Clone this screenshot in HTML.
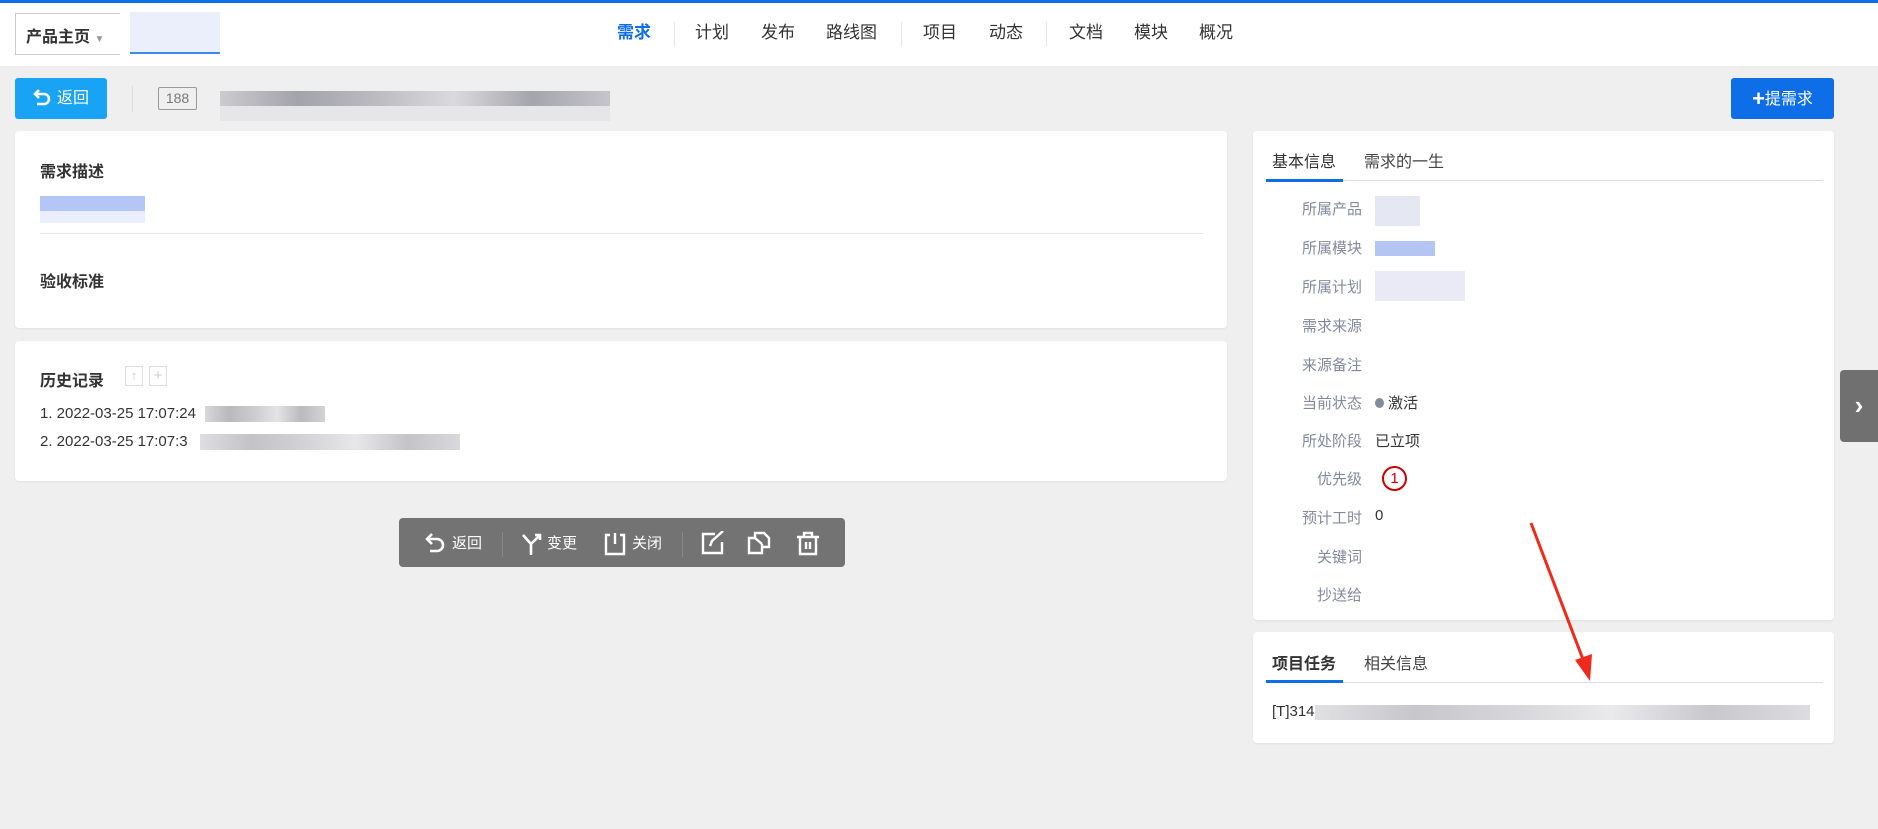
<!DOCTYPE html>
<html><head><meta charset="utf-8"><style>
*{margin:0;padding:0;box-sizing:border-box}
body{width:1878px;height:829px;background:#efefef;font-family:"Liberation Sans","Noto Sans CJK SC",sans-serif;color:#333;position:relative;overflow:hidden;font-size:15px}
.a{position:absolute}
.bar{left:0;top:0;width:1878px;height:3px;background:#0d6ee8}
.hdr{left:0;top:3px;width:1878px;height:63px;background:#fff}
.nav{top:22px;font-size:17px;color:#333;line-height:22px}
.sep{top:22px;width:1px;height:24px;background:#e5e5e5}
.card{background:#fff;border-radius:4px;box-shadow:0 1px 2px rgba(0,0,0,.06)}
.h{font-weight:bold;font-size:16px;color:#333}
.lbl{width:90px;text-align:right;color:#838a9d;left:1272px}
.val{left:1375px;color:#333}
.blur{background:linear-gradient(90deg,#c8c8cc,#9a9aa2,#b5b5bb,#d8d8dc,#9c9ca4,#c0c0c6)}
.tb{color:#fff;font-size:15px;top:533px;line-height:22px}
</style></head><body>
<div class="a bar"></div>
<div class="a hdr"></div>
<div class="a" style="left:15px;top:13px;width:105px;height:42px;border:1px solid #ccc;border-right:none;background:#fff"></div>
<div class="a" style="left:26px;top:23px;font-size:16px;font-weight:bold;color:#333">产品主页 <span style="color:#999;font-size:10px">▼</span></div>
<div class="a" style="left:130px;top:12px;width:90px;height:42px;background:#e6ecfb;border-bottom:2px solid #0d6ee8;opacity:.8"></div>
<div class="a nav" style="left:617px;color:#0d6ee8;font-weight:bold">需求</div>
<div class="a sep" style="left:674px"></div>
<div class="a nav" style="left:695px">计划</div>
<div class="a nav" style="left:761px">发布</div>
<div class="a nav" style="left:826px">路线图</div>
<div class="a sep" style="left:901px"></div>
<div class="a nav" style="left:923px">项目</div>
<div class="a nav" style="left:989px">动态</div>
<div class="a sep" style="left:1046px"></div>
<div class="a nav" style="left:1069px">文档</div>
<div class="a nav" style="left:1134px">模块</div>
<div class="a nav" style="left:1199px">概况</div>

<div class="a" style="left:15px;top:78px;width:92px;height:41px;background:#18a3f5;border-radius:3px;color:#fff;font-size:16px;line-height:41px;padding-left:42px">返回</div>
<svg class="a" style="left:33px;top:89px" width="18" height="19" viewBox="0 0 18 19" fill="none" stroke="#fff" stroke-width="2.6"><path d="M6 1L2 5l4 4M2 5h9a5 5 0 010 10H4"/></svg>
<div class="a" style="left:132px;top:86px;width:1px;height:26px;background:#ddd"></div>
<div class="a" style="left:158px;top:87px;width:39px;height:23px;border:1px solid #999;border-radius:2px;color:#777;font-size:14px;text-align:center;line-height:21px">188</div>
<div class="a blur" style="left:220px;top:91px;width:390px;height:15px;opacity:.9"></div>
<div class="a" style="left:220px;top:106px;width:390px;height:15px;background:#e6e6e8"></div>
<div class="a" style="left:1731px;top:78px;width:103px;height:41px;background:#0d6ee8;border-radius:3px;color:#fff;font-size:16px;line-height:41px;text-align:center"><b style="font-size:22px;vertical-align:-2px">+</b>提需求</div>

<div class="a card" style="left:15px;top:131px;width:1212px;height:197px"></div>
<div class="a h" style="left:40px;top:158px">需求描述</div>
<div class="a" style="left:40px;top:196px;width:105px;height:15px;background:#b4c6f6"></div>
<div class="a" style="left:40px;top:211px;width:105px;height:12px;background:#eaeefc"></div>
<div class="a" style="left:40px;top:233px;width:1163px;height:1px;background:#e8e8e8"></div>
<div class="a h" style="left:40px;top:268px">验收标准</div>

<div class="a card" style="left:15px;top:341px;width:1212px;height:140px"></div>
<div class="a h" style="left:40px;top:367px">历史记录</div>
<div class="a" style="left:125px;top:366px;width:18px;height:20px;border:1px solid #ddd;color:#ccc;font-size:13px;text-align:center;line-height:18px">↑</div>
<div class="a" style="left:149px;top:366px;width:18px;height:20px;border:1px solid #ddd;color:#ccc;font-size:15px;text-align:center;line-height:18px">+</div>
<div class="a" style="left:40px;top:405px">1. 2022-03-25 17:07:24</div>
<div class="a blur" style="left:205px;top:406px;width:120px;height:16px;opacity:.7"></div>
<div class="a" style="left:40px;top:433px">2. 2022-03-25 17:07:3</div>
<div class="a blur" style="left:200px;top:434px;width:260px;height:16px;opacity:.6"></div>

<div class="a" style="left:399px;top:518px;width:446px;height:49px;background:#737373;border-radius:4px"></div>
<svg class="a" style="left:425px;top:533px" width="20" height="22" viewBox="0 0 20 22" fill="none" stroke="#fff" stroke-width="2.6"><path d="M7 1L2 6l5 5M2 6h10a6 6 0 010 12H5"/></svg>
<div class="a tb" style="left:452px">返回</div>
<div class="a" style="left:502px;top:532px;width:1px;height:25px;background:#888"></div>
<svg class="a" style="left:521px;top:532px" width="22" height="24" viewBox="0 0 22 24" fill="none" stroke="#fff" stroke-width="2.6"><path d="M2 3l8 9v11M18 4l-8 8M14 3h5v5"/></svg>
<div class="a tb" style="left:547px">变更</div>
<svg class="a" style="left:604px;top:532px" width="22" height="24" viewBox="0 0 22 24" fill="none" stroke="#fff" stroke-width="2.4"><path d="M6 3H2v19h18V3h-4M11 1v11"/></svg>
<div class="a tb" style="left:632px">关闭</div>
<div class="a" style="left:682px;top:532px;width:1px;height:25px;background:#888"></div>
<svg class="a" style="left:701px;top:531px" width="24" height="24" viewBox="0 0 24 24" fill="none" stroke="#fff" stroke-width="2.4"><path d="M14 3H2v19h19V11M9 15l2-5 11-10"/></svg>
<svg class="a" style="left:747px;top:531px" width="24" height="24" viewBox="0 0 24 24" fill="none" stroke="#fff" stroke-width="2.4"><path d="M8 7H2v15h13V13M8 7V2h9l5 5v9h-7M8 7l7 6"/></svg>
<svg class="a" style="left:796px;top:531px" width="24" height="25" viewBox="0 0 24 25" fill="none" stroke="#fff" stroke-width="2.4"><path d="M1 6h22M8 6V2h8v4M4 6v17h16V6M10 11v7M14 11v7"/></svg>

<div class="a card" style="left:1253px;top:131px;width:581px;height:489px"></div>
<div class="a" style="left:1272px;top:148px;font-size:16px;color:#333">基本信息</div>
<div class="a" style="left:1364px;top:148px;font-size:16px;color:#444">需求的一生</div>
<div class="a" style="left:1266px;top:180px;width:557px;height:1px;background:#ddd"></div>
<div class="a" style="left:1266px;top:179px;width:77px;height:3px;background:#0d6ee8"></div>
<div class="a lbl" style="top:198px">所属产品</div>
<div class="a" style="left:1375px;top:196px;width:45px;height:30px;background:#e5e7f2"></div>
<div class="a lbl" style="top:237px">所属模块</div>
<div class="a" style="left:1375px;top:241px;width:60px;height:15px;background:#b4c5f4"></div>
<div class="a lbl" style="top:276px">所属计划</div>
<div class="a" style="left:1375px;top:271px;width:90px;height:30px;background:#e9eaf5"></div>
<div class="a lbl" style="top:315px">需求来源</div>
<div class="a lbl" style="top:354px">来源备注</div>
<div class="a lbl" style="top:392px">当前状态</div>
<div class="a val" style="top:392px"><span style="display:inline-block;width:9px;height:10px;border-radius:50%;background:#838a9d;margin-right:4px"></span>激活</div>
<div class="a lbl" style="top:430px">所处阶段</div>
<div class="a val" style="top:430px">已立项</div>
<div class="a lbl" style="top:468px">优先级</div>
<div class="a" style="left:1382px;top:466px;width:25px;height:25px;border:2px solid #c00;border-radius:50%;color:#c00;font-size:15px;text-align:center;line-height:21px">1</div>
<div class="a lbl" style="top:507px">预计工时</div>
<div class="a val" style="top:507px">0</div>
<div class="a lbl" style="top:546px">关键词</div>
<div class="a lbl" style="top:584px">抄送给</div>

<div class="a card" style="left:1253px;top:632px;width:581px;height:111px"></div>
<div class="a" style="left:1272px;top:650px;font-size:16px;font-weight:bold;color:#333">项目任务</div>
<div class="a" style="left:1364px;top:650px;font-size:16px;color:#444">相关信息</div>
<div class="a" style="left:1266px;top:682px;width:557px;height:1px;background:#ddd"></div>
<div class="a" style="left:1266px;top:680px;width:77px;height:3px;background:#0d6ee8"></div>
<div class="a" style="left:1272px;top:703px;color:#333">[T]314</div>
<div class="a blur" style="left:1315px;top:705px;width:495px;height:15px;opacity:.55"></div>

<div class="a" style="left:1840px;top:370px;width:38px;height:72px;background:#707070;border-radius:4px 0 0 4px;color:#fff;font-size:26px;font-weight:bold;text-align:center;line-height:70px">›</div>

<svg class="a" style="left:0;top:0" width="1878" height="829"><line x1="1531" y1="523" x2="1584" y2="662" stroke="#f02a1a" stroke-width="3"/><polygon points="1590,681 1575,660 1592,654" fill="#f02a1a"/></svg>
</body></html>
